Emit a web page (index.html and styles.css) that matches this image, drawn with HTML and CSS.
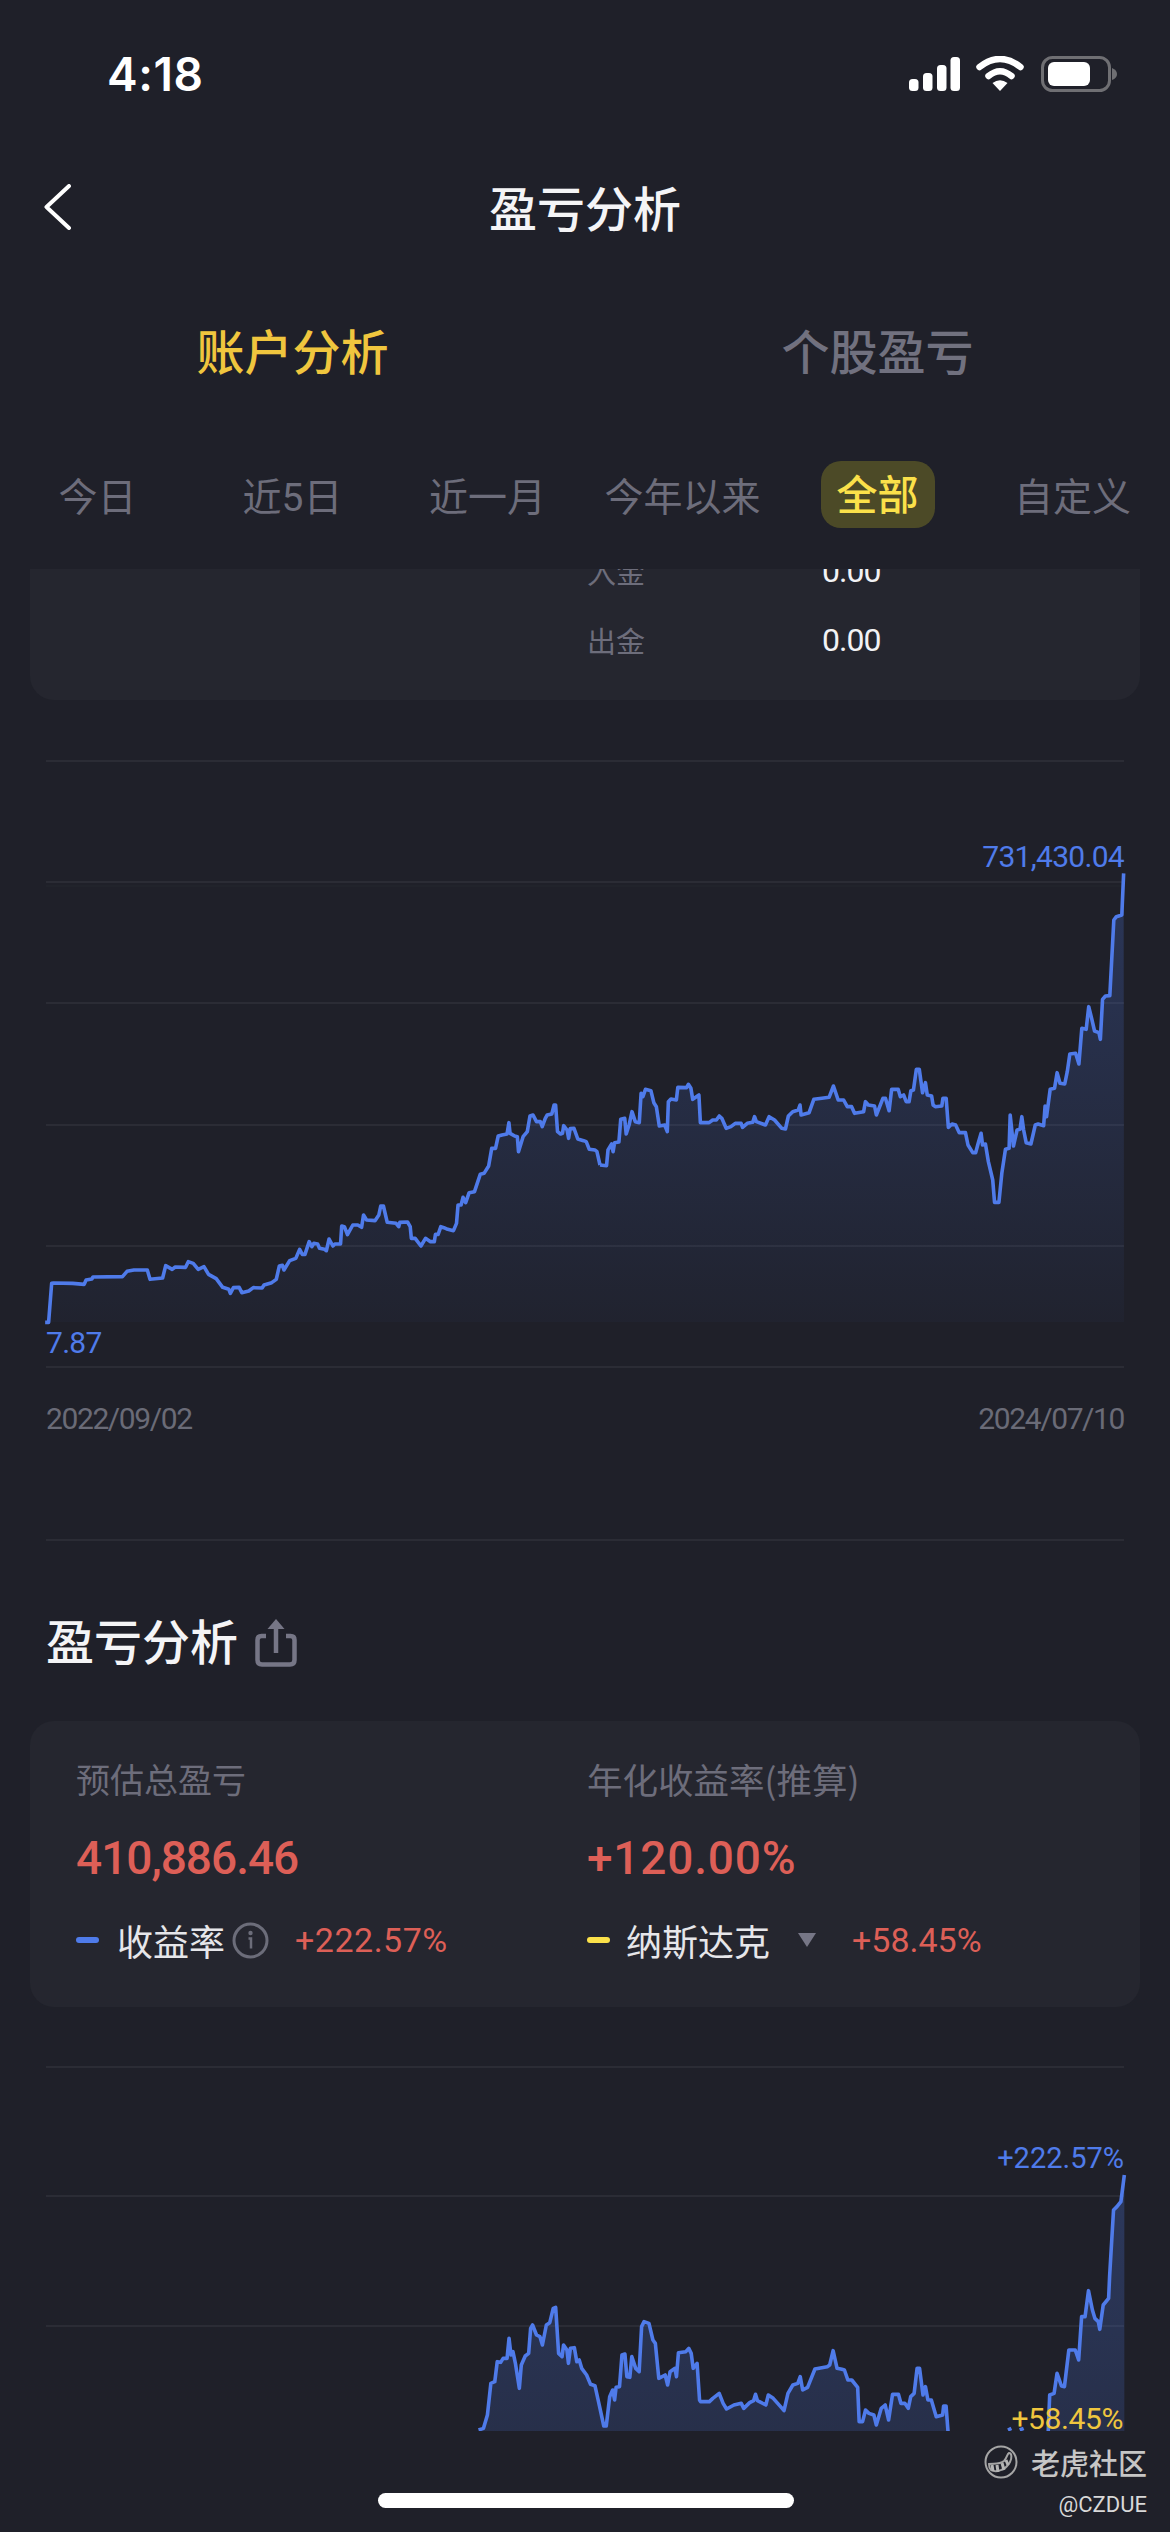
FILE: index.html
```html
<!DOCTYPE html>
<html lang="zh-CN">
<head>
<meta charset="utf-8">
<title>盈亏分析</title>
<link rel="stylesheet" href="styles.css">
</head>
<body>
<div class="screen">
  <header class="status">
    <span class="time">4:18</span>
    <div class="status-icons">
      <svg class="ic-signal" width="51" height="35" viewBox="0 0 51 35"><rect x="0" y="22" width="9.5" height="12" rx="3.5"/><rect x="14" y="16" width="9.5" height="18" rx="3.5"/><rect x="28" y="8" width="9.5" height="26" rx="3.5"/><rect x="41.5" y="0" width="9.5" height="34" rx="3.5"/></svg>
      <svg class="ic-wifi" width="48" height="36" viewBox="0 0 48 36"><path d="M3.5 11Q24 -5 44.500 11" fill="none" stroke="#fff" stroke-width="6.500" stroke-linecap="round"/><path d="M12.500 20Q24 10.500 35.500 20" fill="none" stroke="#fff" stroke-width="6.500" stroke-linecap="round"/><path d="M16.500 27Q24 21.500 31.500 27L24 35Z" fill="#fff"/></svg>
      <svg class="ic-battery" width="76" height="36" viewBox="0 0 76 36"><rect x="1.500" y="1.500" width="67" height="33" rx="10" fill="none" stroke="#6f6f73" stroke-width="3"/><rect x="7" y="6" width="42" height="24" rx="6" fill="#fff"/><path d="M71 12Q76 14 76 18Q76 22 71 24Z" fill="#6f6f73"/></svg>
    </div>
  </header>

  <nav class="nav">
    <svg class="back" width="28" height="46" viewBox="0 0 28 46"><path d="M25 2L2.500 23L25 44" fill="none" stroke="#fff" stroke-width="4" stroke-linecap="round" stroke-linejoin="round"/></svg>
    <h1 class="nav-title">盈亏分析</h1>
  </nav>

  <div class="tabs">
    <span class="tab tab-on">账户分析</span>
    <span class="tab">个股盈亏</span>
  </div>

  <div class="periods">
    <span class="period">今日</span>
    <span class="period">近5日</span>
    <span class="period">近一月</span>
    <span class="period">今年以来</span>
    <span class="period period-on"><b class="pill">全部</b></span>
    <span class="period">自定义</span>
  </div>

  <main class="scroll">
    <section class="card flows">
      <div class="flow-row"><span class="flow-label">入金</span><span class="flow-value">0.00</span></div>
      <div class="flow-row"><span class="flow-label">出金</span><span class="flow-value">0.00</span></div>
    </section>

    <div class="chart chart-one">
      <svg class="plot" width="1170" height="668" viewBox="0 700 1170 668">
        <defs>
          <linearGradient id="fillOne" gradientUnits="userSpaceOnUse" x1="0" y1="0" x2="0" y2="1446">
            <stop offset="0" stop-color="#4f7bea" stop-opacity=".27"/>
            <stop offset="1" stop-color="#4f7bea" stop-opacity=".03"/>
          </linearGradient>
          <linearGradient id="fillTwo" gradientUnits="userSpaceOnUse" x1="0" y1="370" x2="0" y2="1140">
            <stop offset="0" stop-color="#4f7bea" stop-opacity=".27"/>
            <stop offset="1" stop-color="#4f7bea" stop-opacity=".17"/>
          </linearGradient>
        </defs>
        <g class="grid">
          <line x1="46" x2="1124" y1="761" y2="761"/>
          <line x1="46" x2="1124" y1="882" y2="882"/>
          <line class="faint" x1="46" x2="1124" y1="886" y2="886"/>
          <line x1="46" x2="1124" y1="1003" y2="1003"/>
          <line x1="46" x2="1124" y1="1125" y2="1125"/>
          <line x1="46" x2="1124" y1="1246" y2="1246"/>
          <line x1="46" x2="1124" y1="1367" y2="1367"/>
        </g>
        <g transform="translate(0 840) scale(.382653 .333333)">
          <path class="area-one" d="M118 1446L118 1447 127 1447 135 1330 140 1329 190 1330 220 1333 225 1320 240 1317 243 1311 320 1310 332 1294 350 1290 385 1290 392 1318 425 1314 433 1277 450 1288 458 1281 485 1282 492 1265 505 1270 518 1288 533 1280 545 1303 565 1316 582 1342 598 1348 602 1360 610 1343 625 1342 632 1358 650 1353 662 1343 685 1344 690 1335 710 1328 722 1318 730 1278 738 1276 742 1290 757 1262 773 1255 783 1228 790 1243 797 1243 808 1205 815 1220 820 1210 830 1212 835 1225 848 1228 853 1232 860 1197 870 1218 875 1212 890 1212 893 1158 900 1160 908 1184 922 1155 935 1155 945 1162 950 1125 958 1140 980 1142 990 1125 995 1098 1002 1098 1012 1147 1035 1150 1042 1160 1045 1147 1065 1146 1072 1160 1075 1195 1085 1195 1100 1218 1112 1195 1125 1205 1135 1205 1138 1183 1145 1183 1152 1160 1160 1163 1170 1168 1185 1172 1193 1150 1197 1095 1205 1095 1210 1072 1217 1088 1226 1058 1240 1055 1255 1003 1265 1000 1277 978 1285 925 1295 925 1302 888 1312 885 1325 882 1330 848 1333 880 1345 888 1352 890 1355 935 1367 890 1378 875 1385 828 1393 825 1402 845 1412 845 1417 860 1425 835 1430 825 1442 822 1448 795 1452 795 1457 875 1465 882 1470 880 1473 857 1482 870 1486 895 1490 866 1500 865 1510 897 1525 902 1532 905 1540 928 1555 930 1560 935 1568 975L1568 1446Z"/>
          <path class="line" d="M118 1447L127 1447 135 1330 140 1329 190 1330 220 1333 225 1320 240 1317 243 1311 320 1310 332 1294 350 1290 385 1290 392 1318 425 1314 433 1277 450 1288 458 1281 485 1282 492 1265 505 1270 518 1288 533 1280 545 1303 565 1316 582 1342 598 1348 602 1360 610 1343 625 1342 632 1358 650 1353 662 1343 685 1344 690 1335 710 1328 722 1318 730 1278 738 1276 742 1290 757 1262 773 1255 783 1228 790 1243 797 1243 808 1205 815 1220 820 1210 830 1212 835 1225 848 1228 853 1232 860 1197 870 1218 875 1212 890 1212 893 1158 900 1160 908 1184 922 1155 935 1155 945 1162 950 1125 958 1140 980 1142 990 1125 995 1098 1002 1098 1012 1147 1035 1150 1042 1160 1045 1147 1065 1146 1072 1160 1075 1195 1085 1195 1100 1218 1112 1195 1125 1205 1135 1205 1138 1183 1145 1183 1152 1160 1160 1163 1170 1168 1185 1172 1193 1150 1197 1095 1205 1095 1210 1072 1217 1088 1226 1058 1240 1055 1255 1003 1265 1000 1277 978 1285 925 1295 925 1302 888 1312 885 1325 882 1330 848 1333 880 1345 888 1352 890 1355 935 1367 890 1378 875 1385 828 1393 825 1402 845 1412 845 1417 860 1425 835 1430 825 1442 822 1448 795 1452 795 1457 875 1465 882 1470 880 1473 857 1482 870 1486 895 1490 866 1500 865 1510 897 1525 902 1532 905 1540 928 1555 930 1560 935 1568 975"/>
        </g>
        <g transform="translate(600 840) scale(.363636 .333333)">
          <path class="area-one" d="M0 1446L0 975 18 977 22 930 32 912 36 935 40 908 52 906 57 838 68 835 72 882 80 855 88 815 97 845 108 848 113 760 118 770 125 748 140 752 148 788 155 800 163 858 178 855 185 875 188 785 195 777 210 780 214 742 238 743 243 733 250 745 255 778 272 765 276 848 300 848 310 840 320 840 328 828 335 835 347 865 360 860 372 850 388 850 392 862 405 850 420 847 425 830 430 845 455 855 465 830 480 840 500 865 510 867 518 828 530 815 545 810 550 795 553 825 575 818 588 778 610 775 630 772 642 738 655 780 670 780 680 800 692 800 700 820 725 815 730 785 738 795 755 798 760 825 778 775 785 775 795 812 802 748 820 748 826 770 835 765 842 785 850 785 855 752 862 750 870 688 878 688 887 758 895 728 900 765 912 768 916 795 922 800 940 798 943 775 952 775 958 862 968 852 978 855 988 878 1005 878 1012 915 1025 938 1033 938 1040 910 1048 880 1052 915 1060 912 1068 965 1080 1020 1085 1087 1097 1087 1105 1000 1115 928 1125 925 1128 825 1137 918 1147 870 1155 868 1160 830 1165 870 1172 908 1185 912 1197 855 1205 852 1220 857 1224 798 1228 830 1238 748 1250 745 1257 698 1265 730 1278 732 1285 695 1292 642 1308 640 1317 672 1325 565 1337 568 1344 500 1352 535 1360 573 1372 578 1376 598 1382 478 1390 468 1402 467 1413 240 1420 230 1435 225 1440 100 1441 1446Z"/>
          <path class="line" d="M0 975L18 977 22 930 32 912 36 935 40 908 52 906 57 838 68 835 72 882 80 855 88 815 97 845 108 848 113 760 118 770 125 748 140 752 148 788 155 800 163 858 178 855 185 875 188 785 195 777 210 780 214 742 238 743 243 733 250 745 255 778 272 765 276 848 300 848 310 840 320 840 328 828 335 835 347 865 360 860 372 850 388 850 392 862 405 850 420 847 425 830 430 845 455 855 465 830 480 840 500 865 510 867 518 828 530 815 545 810 550 795 553 825 575 818 588 778 610 775 630 772 642 738 655 780 670 780 680 800 692 800 700 820 725 815 730 785 738 795 755 798 760 825 778 775 785 775 795 812 802 748 820 748 826 770 835 765 842 785 850 785 855 752 862 750 870 688 878 688 887 758 895 728 900 765 912 768 916 795 922 800 940 798 943 775 952 775 958 862 968 852 978 855 988 878 1005 878 1012 915 1025 938 1033 938 1040 910 1048 880 1052 915 1060 912 1068 965 1080 1020 1085 1087 1097 1087 1105 1000 1115 928 1125 925 1128 825 1137 918 1147 870 1155 868 1160 830 1165 870 1172 908 1185 912 1197 855 1205 852 1220 857 1224 798 1228 830 1238 748 1250 745 1257 698 1265 730 1278 732 1285 695 1292 642 1308 640 1317 672 1325 565 1337 568 1344 500 1352 535 1360 573 1372 578 1376 598 1382 478 1390 468 1402 467 1413 240 1420 230 1435 225 1440 100"/>
        </g>
      </svg>
      <span class="num tag tag-top">731,430.04</span>
      <span class="num tag tag-low">7.87</span>
    </div>

    <div class="num dates"><span>2022/09/02</span><span>2024/07/10</span></div>
    <div class="divider"></div>

    <div class="section-head">
      <h2 class="section-title">盈亏分析</h2>
      <svg class="share" width="42" height="48" viewBox="0 0 42 48"><path d="M11 17H6.500Q2.500 17 2.500 21V41Q2.500 45.500 7 45.500H35Q39.500 45.500 39.500 41V21Q39.500 17 35.500 17H31" fill="none" stroke="#767686" stroke-width="4.500"/><path d="M21 34V4" fill="none" stroke="#767686" stroke-width="4.500"/><path d="M21 0L29.500 10H12.500Z" fill="#767686"/></svg>
    </div>

    <section class="card summary">
      <div class="col">
        <div class="sum-label sum-label-short">预估总盈亏</div>
        <div class="num sum-value sum-value-money">410,886.46</div>
        <div class="legend">
          <i class="dash dash-blue"></i>
          <span class="legend-name">收益率</span>
          <svg class="info" width="37" height="37" viewBox="0 0 37 37"><circle cx="18.500" cy="18.500" r="16.500" fill="none" stroke="#6c6d7a" stroke-width="3"/><circle cx="18.500" cy="11" r="2.200" fill="#6c6d7a"/><path d="M16.500 16.500H19V26.500" fill="none" stroke="#6c6d7a" stroke-width="2.500"/></svg>
          <span class="num legend-pct legend-pct-a">+222.57%</span>
        </div>
      </div>
      <div class="col">
        <div class="sum-label">年化收益率(推算)</div>
        <div class="num sum-value sum-value-pct">+120.00%</div>
        <div class="legend">
          <i class="dash dash-yellow"></i>
          <span class="legend-name legend-name-b">纳斯达克</span>
          <svg class="caret" width="18" height="14" viewBox="0 0 18 14"><path d="M0 0H18L9 14Z" fill="#767686"/></svg>
          <span class="num legend-pct">+58.45%</span>
        </div>
      </div>
    </section>

    <div class="chart chart-two">
      <svg class="plot" width="1170" height="424" viewBox="0 2007 1170 424">
        <g class="grid">
          <line x1="46" x2="1124" y1="2067" y2="2067"/>
          <line x1="46" x2="1124" y1="2196" y2="2196"/>
          <line x1="46" x2="1124" y1="2326" y2="2326"/>
        </g>
        <g transform="translate(400 2050) scale(.491071 .333333)">
          <path class="area-two" d="M160 1145L160 1140 170 1135 178 1095 185 1000 193 995 198 935 205 937 210 925 218 925 222 865 226 915 230 905 235 940 243 1015 247 945 255 918 262 910 266 835 270 825 278 855 285 860 290 885 298 825 305 818 312 775 317 772 323 910 330 920 333 885 340 900 343 940 347 895 355 893 360 935 365 930 370 955 380 975 388 1003 397 1007 405 1060 415 1128 420 1128 427 1040 433 1020 437 1050 440 1012 447 1010 452 915 458 912 462 980 468 982 472 920 480 955 487 965 492 830 497 815 507 820 515 870 520 880 527 985 540 975 545 1005 550 965 560 955 563 980 567 908 582 905 588 895 593 910 597 955 605 940 610 1050 612 1055 630 1055 637 1045 650 1030 658 1060 665 1077 680 1065 695 1060 700 1075 712 1058 720 1052 724 1033 728 1052 745 1065 750 1035 760 1045 775 1070 782 1082 790 1030 800 1005 810 1000 815 980 820 1020 830 1012 845 957 870 950 875 945 882 902 890 955 900 958 905 960 912 990 920 990 932 1012 935 1115 942 1115 948 1080 955 1090 965 1095 970 1125 980 1075 988 1065 995 1110 1003 1033 1015 1033 1020 1060 1028 1060 1035 1075 1040 1040 1047 1030 1053 955 1058 955 1065 1035 1070 1010 1075 1050 1082 1050 1092 1100 1105 1095 1107 1068 1112 1068 1116 1145Z"/>
          <path class="line" d="M160 1140L170 1135 178 1095 185 1000 193 995 198 935 205 937 210 925 218 925 222 865 226 915 230 905 235 940 243 1015 247 945 255 918 262 910 266 835 270 825 278 855 285 860 290 885 298 825 305 818 312 775 317 772 323 910 330 920 333 885 340 900 343 940 347 895 355 893 360 935 365 930 370 955 380 975 388 1003 397 1007 405 1060 415 1128 420 1128 427 1040 433 1020 437 1050 440 1012 447 1010 452 915 458 912 462 980 468 982 472 920 480 955 487 965 492 830 497 815 507 820 515 870 520 880 527 985 540 975 545 1005 550 965 560 955 563 980 567 908 582 905 588 895 593 910 597 955 605 940 610 1050 612 1055 630 1055 637 1045 650 1030 658 1060 665 1077 680 1065 695 1060 700 1075 712 1058 720 1052 724 1033 728 1052 745 1065 750 1035 760 1045 775 1070 782 1082 790 1030 800 1005 810 1000 815 980 820 1020 830 1012 845 957 870 950 875 945 882 902 890 955 900 958 905 960 912 990 920 990 932 1012 935 1115 942 1115 948 1080 955 1090 965 1095 970 1125 980 1075 988 1065 995 1110 1003 1033 1015 1033 1020 1060 1028 1060 1035 1075 1040 1040 1047 1030 1053 955 1058 955 1065 1035 1070 1010 1075 1050 1082 1050 1092 1100 1105 1095 1107 1068 1112 1068 1116 1145"/>
          <path class="area-two" d="M1320 1145L1323 1035 1332 1030 1338 970 1347 1008 1353 1010 1362 900 1375 900 1382 930 1388 800 1395 800 1402 722 1410 780 1415 805 1422 815 1425 838 1432 765 1443 745 1445 680 1453 480 1460 470 1468 455 1475 375V1145Z"/>
          <path class="line" d="M1320 1145L1323 1035 1332 1030 1338 970 1347 1008 1353 1010 1362 900 1375 900 1382 930 1388 800 1395 800 1402 722 1410 780 1415 805 1422 815 1425 838 1432 765 1443 745 1445 680 1453 480 1460 470 1468 455 1475 375"/>
          <path class="line" d="M1238 1140L1245 1135M1262 1140L1270 1135"/>
        </g>
      </svg>
      <span class="num tag tag-pct">+222.57%</span>
      <span class="num tag tag-nasdaq">+58.45%</span>
    </div>
  </main>

  <footer class="footer"><div class="home"></div></footer>

  <div class="watermark">
    <div class="wm-brand">
      <svg class="wm-logo" width="34" height="34" viewBox="0 0 34 34"><circle cx="17" cy="17" r="15.500" fill="none" stroke="#a5a5a5" stroke-width="2"/><path d="M5 19C9 18 15 20 20 16C23 13 23 9 25 8C28 8 28 13 26 17C22 25 12 28 7 25C5 23 5 21 5 19Z" fill="none" stroke="#a5a5a5" stroke-width="2"/><path d="M8 20L9 26M13 20L14 27M18 18L20 25M22 15L24 20" stroke="#b5b5b5" stroke-width="3"/></svg>
      <span class="wm-name">老虎社区</span>
    </div>
    <div class="wm-user">@CZDUE</div>
  </div>
</div>
</body>
</html>
```

FILE: styles.css
```css
* { box-sizing: border-box; }
html, body { margin: 0; padding: 0; background: #1f2029; }
body { font-family: "Noto Sans CJK SC", "Noto Sans", sans-serif; color: #fff; }
h1, h2 { margin: 0; font: inherit; }

.screen { position: relative; width: 1170px; height: 2532px; overflow: hidden; display: flex; flex-direction: column; background: #1f2029; }
.num { font-family: Roboto, "Noto Sans CJK SC", sans-serif; }

.status { height: 146px; flex: none; padding: 2px 53px 0 107px; display: flex; align-items: center; justify-content: space-between; }
.time { font: 600 46px/1 Inter, Roboto, sans-serif; letter-spacing: .6px; }
.status-icons { display: flex; align-items: center; gap: 16px; }
.ic-signal { fill: #fff; }
.ic-wifi { margin-right: 1px; }

.nav { position: relative; height: 122px; flex: none; padding-bottom: 3px; display: flex; align-items: center; justify-content: center; }
.back { position: absolute; left: 44px; top: 38px; }
.nav-title { font-size: 48px; line-height: 60px; font-weight: 500; color: #f4f4f6; }

.tabs { height: 166px; flex: none; padding-bottom: 5px; display: grid; grid-template-columns: 585px 585px; align-items: center; justify-items: center; }
.tab { font-size: 48px; line-height: 60px; font-weight: 500; color: #71717f; }
.tab-on { color: #f0c63e; }

.periods { height: 135px; flex: none; padding: 27px 0 41px; display: grid; grid-template-columns: repeat(6, 195px); align-items: center; justify-items: center; }
.period { padding-top: 6px; font-family: Roboto, "Noto Sans CJK SC", sans-serif; font-size: 39px; line-height: 50px; color: #6d6d7b; white-space: nowrap; }
.period-on { padding-top: 0; }
.pill { display: block; width: 114px; height: 67px; line-height: 70px; text-align: center; border-radius: 20px; background: #4c4a27; color: #fbe14a; font-weight: 500; font-size: 41px; }

.scroll { height: 1862px; flex: none; overflow: hidden; }
.card { margin: 0 30px; background: #25262f; border-radius: 24px; }

.flows { margin-top: -33px; padding: 0 0 26px 557px; }
.flow-row { height: 69px; display: flex; align-items: center; }
.flow-label { width: 235px; font-size: 29px; color: #6d6d7b; }
.flow-value { font-family: Roboto, sans-serif; font-size: 32px; letter-spacing: -1px; color: #f2f2f5; }

.chart { position: relative; }
.plot { display: block; }
.grid line { stroke: #2b2c35; stroke-width: 2; }
.grid line.faint { stroke: #25262f; stroke-width: 1; }
.line { fill: none; stroke: #4f7bea; stroke-width: 3.6; stroke-linejoin: round; vector-effect: non-scaling-stroke; }
.area-one { fill: url(#fillOne); }
.area-two { fill: url(#fillTwo); }

.tag { position: absolute; font-size: 30px; line-height: 36px; letter-spacing: -.7px; color: #4f7bea; white-space: nowrap; }
.tag-top { right: 46px; top: 139px; }
.tag-low { left: 46px; top: 625px; }
.tag-pct { right: 46px; top: 133px; font-size: 29px; letter-spacing: 0; }
.tag-nasdaq { right: 47px; top: 394px; font-size: 30px; letter-spacing: -.4px; color: #f0c63e; }

.dates { height: 66px; padding: 36px 46px 0; display: flex; justify-content: space-between; font-size: 30px; line-height: 30px; color: #6a6b77; letter-spacing: -1.4px; }
.divider { height: 2px; margin: 105px 46px 0; background: #2b2c35; }

.section-head { margin: 74px 46px 58px; height: 48px; display: flex; align-items: center; gap: 17px; }
.section-title { font-size: 48px; line-height: 48px; font-weight: 500; color: #f4f4f6; }
.share { margin-top: 8px; }

.summary { height: 286px; padding: 38px 0 0 46px; display: grid; grid-template-columns: 511px 1fr; }
.col { display: flex; flex-direction: column; }
.sum-label { height: 40px; font-size: 35.5px; line-height: 40px; color: #6d6d7b; }
.sum-label-short { font-size: 34px; }
.sum-value { margin-top: 31px; height: 56px; font-size: 46px; line-height: 56px; font-weight: 500; color: #dd5f57; }
.sum-value-money { letter-spacing: -1px; }
.sum-value-pct { letter-spacing: .8px; }
.legend { margin-top: 32px; height: 44px; display: flex; align-items: center; }
.dash { width: 23px; height: 6px; border-radius: 3px; flex: none; }
.dash-blue { background: #4f7bea; }
.dash-yellow { background: #fbe14a; }
.legend-name { margin-left: 18px; font-size: 36px; line-height: 44px; color: #e6e6ea; }
.legend-name-b { margin-left: 16px; }
.info { margin-left: 7px; }
.caret { margin-left: 28px; }
.legend-pct { margin-left: 26px; font-size: 34px; line-height: 44px; color: #dd5f57; }
.legend-pct-a { letter-spacing: .5px; }
.caret + .legend-pct { margin-left: 36px; }

.footer { height: 101px; flex: none; padding-top: 62px; }
.home { width: 416px; height: 15px; margin: 0 0 0 378px; border-radius: 8px; background: #fff; }

.watermark { position: absolute; right: 23px; top: 2444px; display: flex; flex-direction: column; align-items: flex-end; }
.wm-brand { display: flex; align-items: center; gap: 13px; height: 36px; }
.wm-name { font-size: 29px; line-height: 36px; font-weight: 500; color: #c6c6c6; }
.wm-user { margin-top: 12px; font-family: Roboto, sans-serif; font-size: 22px; line-height: 26px; color: #d8d8d8; }
```
